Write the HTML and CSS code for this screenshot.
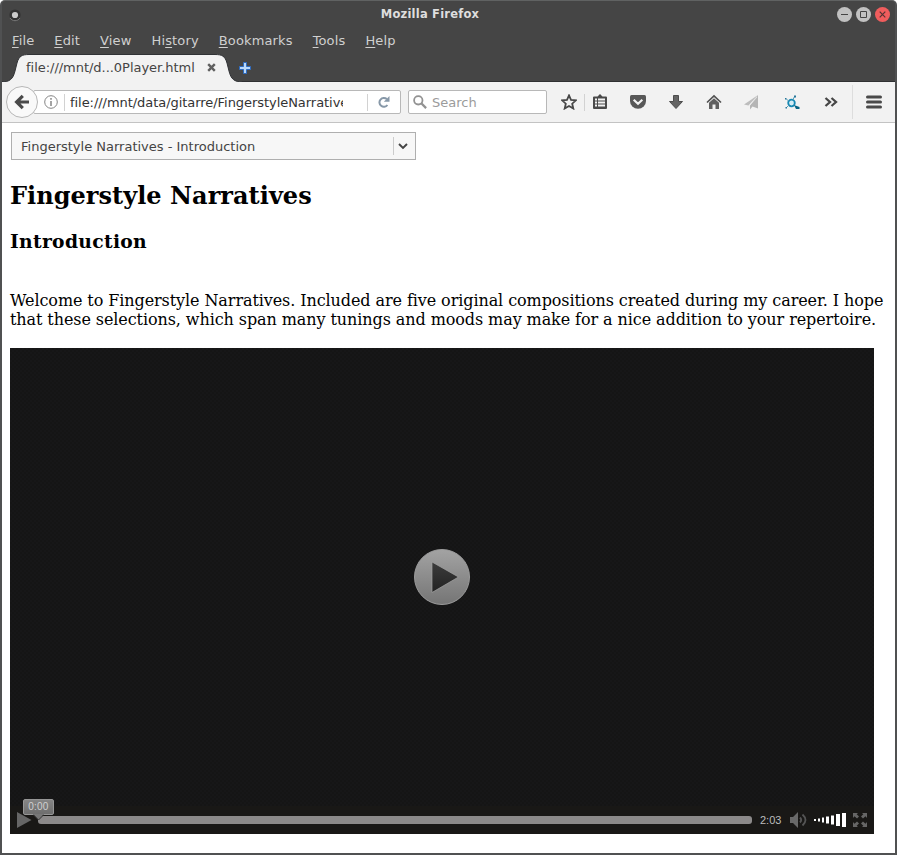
FILE: index.html
```
<!DOCTYPE html>
<html lang="en">
<head>
<meta charset="utf-8">
<title>Mozilla Firefox</title>
<link rel="stylesheet" href="styles.css">
</head>
<body>
<div class="window">
  <header class="titlebar">
    <svg class="dot" width="14" height="14" viewBox="0 0 14 14"><circle cx="7" cy="7" r="5.6" fill="#333"/><path d="M2 10a6 6 0 0 0 10 0" fill="none" stroke="#777"/><circle cx="7" cy="7" r="3.1" fill="#ccc"/></svg>
    <span class="title">Mozilla Firefox</span>
    <div class="controls">
      <svg width="15" height="15" viewBox="0 0 15 15"><circle cx="7.5" cy="7.5" r="7.5" fill="#c1c1c1"/><path d="M4 7.5h7" stroke="#444"/></svg>
      <svg width="15" height="15" viewBox="0 0 15 15"><circle cx="7.5" cy="7.5" r="7.5" fill="#c1c1c1"/><path d="M4.5 4.5h6v6h-6z" fill="none" stroke="#444"/></svg>
      <svg width="15" height="15" viewBox="0 0 15 15"><circle cx="7.5" cy="7.5" r="7.5" fill="#f05d5d"/><path d="M4.7 4.7l5.6 5.6M10.3 4.7l-5.6 5.6" stroke="#533" stroke-width="1.2"/></svg>
    </div>
  </header>
  <nav class="menu">
    <span><u>F</u>ile</span><span><u>E</u>dit</span><span><u>V</u>iew</span><span>Hi<u>s</u>tory</span><span><u>B</u>ookmarks</span><span><u>T</u>ools</span><span><u>H</u>elp</span>
  </nav>
  <div class="tabs">
    <div class="tab">
      <svg class="tab-shape" width="242" height="29" viewBox="0 0 242 29"><path d="M0 28C9 28 12 25 14 17L16 9C18 2 21 .5 28 .5H214C221 .5 224 2 226 9L228 17C230 25 233 28 242 28V29H0Z" fill="#f2f2f2" stroke="#303235"/><path d="M0 28.5H242" stroke="#f2f2f2"/></svg>
      <span class="tab-label">file:///mnt/d...0Player.html</span>
      <svg class="tab-close" width="9" height="9" viewBox="0 0 9 9"><path d="M1.2 1.2l6.6 6.6M7.8 1.2l-6.6 6.6" stroke="#606060" stroke-width="2.4"/></svg>
    </div>
    <svg class="plus" width="12" height="12" viewBox="0 0 12 12"><path d="M4.5.5h3v4h4v3h-4v4h-3v-4h-4v-3h4z" fill="#b9d8fa" stroke="#2d6bc0"/></svg>
  </div>
  <div class="toolbar">
    <div class="back"><svg width="16" height="16" viewBox="0 0 16 16"><path d="M8.8 1.8L2.600 8l6.200 6.200M3 8H15" fill="none" stroke="#4a4a4a" stroke-width="3.200"/></svg></div>
    <div class="url">
      <svg class="info" width="14" height="14" viewBox="0 0 14 14"><circle cx="7" cy="7" r="6.3" fill="none" stroke="#858585"/><path d="M7 6v5M7 3v1.7" stroke="#858585" stroke-width="1.5"/></svg>
      <i class="rule"></i>
      <span class="address">file:///mnt/data/gitarre/FingerstyleNarrative</span>
      <i class="rule end"></i>
      <svg class="reload" width="12" height="12" viewBox="0 0 12 12"><path d="M8.8 3.1A4.4 4.4 0 1 0 9.4 9" fill="none" stroke="#8798a8" stroke-width="2"/><path d="M11.5 0v5.8H5.8z" fill="#8798a8"/></svg>
    </div>
    <div class="search">
      <svg width="14" height="14" viewBox="0 0 14 14"><circle cx="5.3" cy="5.3" r="4.2" fill="none" stroke="#929292" stroke-width="1.8"/><path d="M8.3 8.3l4.8 4.8" stroke="#929292" stroke-width="2.3"/></svg>
      <span>Search</span>
    </div>
    <div class="icons">
      <svg class="star" width="16" height="16" viewBox="0 0 16 16"><path d="M8 1.4l2 4.5 4.9.5-3.7 3.3 1.1 4.8L8 12l-4.3 2.5 1.1-4.8L1.1 6.4 6 5.900z" fill="none" stroke="#484848" stroke-width="1.8"/></svg>
      <i class="rule"></i>
      <svg class="list" width="16" height="16" viewBox="0 0 16 16"><path d="M2 2.500h3.500L8 0l2.500 2.500H14q1 0 1 1V14q0 1-1 1H2q-1 0-1-1V3.500q0-1 1-1z" fill="#4a4a4a"/><path d="M3 5.500h2M6 5.500H13M3 8.500h2M6 8.500H13M3 11.500h2M6 11.500H13" stroke="#f3f3f3" stroke-width="2"/></svg>
      <svg width="16" height="16" viewBox="0 0 16 16"><path d="M1.500 1h13q1.500 0 1.500 1.500V7a8 7.800 0 0 1-16 0V2.500Q0 1 1.500 1z" fill="#585858"/><path d="M3.700 5.700L8 9.700l4.300-4" fill="none" stroke="#f3f3f3" stroke-width="2.200"/></svg>
      <svg width="16" height="16" viewBox="0 0 16 16"><path d="M5.500 1.500h5v6h4L8 14.500 1.500 7.500h4z" fill="#656565" stroke="#4d4d4d"/></svg>
      <svg width="16" height="16" viewBox="0 0 16 16"><path d="M1 8.500L8 2l7 6.500" fill="none" stroke="#525252" stroke-width="1.700"/><path d="M3 8.700L8 4.300l5 4.400V15H9.500v-4.500h-3V15H3z" fill="#606060"/></svg>
      <svg width="16" height="16" viewBox="0 0 16 16"><path d="M14 1L0 10.500l4.500 1z" fill="#bdbdbd"/><path d="M14 1L6 11.500v4L8.500 12.600l5.500 1.900z" fill="#b5b5b5"/><path d="M13 3L5.500 11.500" stroke="#eee" stroke-width=".7"/></svg>
      <svg class="hub" width="16" height="16" viewBox="0 0 16 16"><circle cx="7.500" cy="9" r="3.300" fill="#d5edf5" stroke="#1688b3" stroke-width="1.800"/><path d="M9 5.500L10.500 2.500M4.500 7L2.500 5M4.500 11.500L3 13" stroke="#5e9fb8" stroke-width="1"/><path d="M10 1.500h2v2h-2zM1 4h1.500v1.500H1zM1.500 13H3v1.500H1.500z" fill="#27779b"/><path d="M10 11l5.500 2v2H12z" fill="#076384"/></svg>
      <svg class="more" width="14" height="16" viewBox="0 0 14 16"><path d="M1.500 4L6 8l-4.500 4M7.500 4L12 8l-4.500 4" fill="none" stroke="#474747" stroke-width="2.300"/></svg>
      <i class="divider"></i>
      <svg class="burger" width="16" height="14" viewBox="0 0 16 14"><path d="M1.500 2h13M1.500 7h13M1.500 12h13" stroke="#494949" stroke-width="3" stroke-linecap="round"/></svg>
    </div>
  </div>
  <main class="page">
    <div class="select"><span>Fingerstyle Narratives - Introduction</span><i class="select-rule"></i><svg width="10" height="7" viewBox="0 0 10 7"><path d="M1 1l4 4 4-4" fill="none" stroke="#444" stroke-width="1.900"/></svg></div>
    <h2>Fingerstyle Narratives</h2>
    <h3>Introduction</h3>
    <p>Welcome to Fingerstyle Narratives. Included are five original compositions created during my career. I hope<br>that these selections, which span many tunings and moods may make for a nice addition to your repertoire.</p>
    <section class="video">
      <div class="screen">
        <svg width="56" height="56" viewBox="0 0 56 56"><defs><linearGradient id="disc" x2="0" y2="1"><stop stop-color="#a3a3a3"/><stop offset="1" stop-color="#757575"/></linearGradient><linearGradient id="tri" x2="0" y2="1"><stop stop-color="#3c3c3c"/><stop offset="1" stop-color="#222"/></linearGradient></defs><circle cx="28" cy="28" r="27.500" fill="url(#disc)" stroke="#9b9b9b"/><path d="M18 13L44.500 28 18 43.500z" fill="url(#tri)" stroke="#a5a5a5" stroke-width=".7"/></svg>
      </div>
      <div class="player">
        <svg class="play" width="15" height="16" viewBox="0 0 15 16"><path d="M0 0L14.500 8 0 16z" fill="#666"/></svg>
        <div class="track"><div class="tip">0:00<svg width="11" height="7" viewBox="0 0 11 7"><path d="M0 0h11L5.500 6z" fill="#777"/><path d="M0 .5L5.500 6 11 .5" fill="none" stroke="#333" stroke-width="1"/></svg></div></div>
        <span class="duration">2:03</span>
        <svg class="speaker" width="18" height="16" viewBox="0 0 18 16"><path d="M0 5h3l5-5v16l-5-5H0z" fill="#696969"/><path d="M10 5.500q2.500 2.500 0 5M12.500 2.500q6 5.500 0 11" fill="none" stroke="#555" stroke-width="1.800"/></svg>
        <svg class="volume" width="32" height="14" viewBox="0 0 32 14"><path d="M0 6h2v2H0zM4 5.500h2v3H4zM8 4.500h2v5H8zM12 3.500h3v7h-3zM17 2.500h3v9h-3zM22 1h4v12h-4zM28 0h4v14h-4z" fill="#fff"/></svg>
        <svg class="full" width="14" height="14" viewBox="0 0 14 14"><path d="M0 0h5L3.700 1.300 6 3.600 4 5.600 1.500 3.300 0 5zM14 0v5l-1.500-1.700L10 5.600 8 3.600l2.300-2.300L9 0zM0 14V9l1.500 1.700L4 8.400l2 2-2.300 2.300L5 14zM14 14H9l1.300-1.300L8 10.400l2-2 2.500 2.300L14 9z" fill="#666"/></svg>
      </div>
    </section>
  </main>
</div>
</body>
</html>
```
FILE: styles.css
```
* { box-sizing: border-box; }
body { margin: 0; background: #fff; font-family: "DejaVu Sans", sans-serif; overflow: hidden; }
svg { display: block; flex: none; }
.window { width: 897px; height: 855px; border: 2px solid #505152; border-top: 1px solid #606262; border-radius: 5px 5px 0 0; background: #454545; display: flex; flex-direction: column; overflow: hidden; }
.titlebar { height: 27px; flex: none; display: grid; grid-template-columns: 60px 1fr 60px; align-items: center; color: #dedede; }
.dot { margin-left: 6px; }
.title { font-size: 11.5px; letter-spacing: .22px; font-weight: bold; text-align: center; margin: 0 37px 2px 0; }
.controls { display: flex; gap: 4px; margin-left: 2px; }
.menu { height: 26px; flex: none; padding-left: 10px; display: flex; gap: 20px; line-height: 25px; font-size: 13px; letter-spacing: .14px; color: #d0d0d0; white-space: nowrap; }
.menu u { text-underline-offset: 2px; }
.tabs { height: 28px; flex: none; border-bottom: 1px solid #2f3032; display: flex; align-items: center; }
.tab { position: relative; width: 237px; height: 28px; padding-left: 24px; display: flex; align-items: center; color: #444; font-size: 13px; }
.tab-shape { position: absolute; left: -1px; top: 0; }
.tab-label { position: relative; width: 181px; white-space: nowrap; line-height: 26px; letter-spacing: -.03px; }
.tab-close { position: relative; }
.toolbar { height: 41px; flex: none; background: #f2f2f2; border-bottom: 1px solid #c3c3c3; display: flex; align-items: center; }
.back { position: relative; z-index: 1; margin-left: 4px; width: 32px; height: 32px; border: 1px solid #b7b7b7; border-radius: 50%; background: #f9f9f9; display: flex; align-items: center; justify-content: center; flex: none; }
.url { width: 368px; height: 24px; margin-left: -5px; border: 1px solid #b8b8b8; border-radius: 2px; background: #fff; display: flex; align-items: center; padding-left: 10px; flex: none; }
.rule { width: 1px; height: 17px; background: #d2d2d2; flex: none; }
.info + .rule { margin: 0 5px 0 6px; }
.address { width: 273px; overflow: hidden; white-space: nowrap; font-size: 13px; letter-spacing: -.05px; color: #333; flex: none; }
.end { margin: 0 10px 0 24px; }
.search { width: 139px; height: 24px; margin-left: 7px; border: 1px solid #b8b8b8; border-radius: 2px; background: #fff; display: flex; align-items: center; gap: 5px; padding-left: 4px; font-size: 13px; color: #9b9b9b; flex: none; }
.icons { display: flex; align-items: center; margin-left: 14px; }
.icons .rule { margin: 0 7px; }
.list { margin-right: 22px; }
.list ~ svg { margin-right: 22px; }
.icons .hub { margin: 0 24px 0 2px; }
.icons .more { margin-right: 14px; }
.divider { width: 1px; height: 34px; background: #ddd; margin-right: 13px; }
.icons .burger { margin: 0; }
.page { flex: 1; background: #fff; padding: 9px 8px 0; color: #000; font-family: "DejaVu Serif", serif; }
.select { width: 405px; height: 28px; margin-left: 1px; border: 1px solid #afafaf; background: #f7f7f7; display: flex; align-items: center; padding: 0 7px 0 9px; font: 13px "DejaVu Sans", sans-serif; color: #444; }
.select span { flex: 1; }
.select-rule { width: 1px; height: 18px; background: #ccc; margin-right: 4px; }
h2 { margin: 21px 0 0; font-size: 24px; line-height: 30px; letter-spacing: .04px; }
h3 { margin: 19px 0 0; font-size: 18.72px; line-height: 23px; letter-spacing: .32px; }
p { margin: 38px 0 0; font-size: 16px; line-height: 19px; letter-spacing: -.086px; white-space: nowrap; }
.video { margin-top: 19px; width: 864px; height: 486px; display: flex; flex-direction: column; background: repeating-conic-gradient(#151515 0 25%, #171718 0 50%) 0 0 / 4px 4px; }
.screen { height: 458px; display: flex; justify-content: center; align-items: center; }
.player { height: 28px; background: #191816; display: flex; align-items: center; padding-left: 7px; font-family: "Liberation Sans", sans-serif; }
.track { position: relative; width: 714px; height: 8px; margin-left: 6px; border-radius: 3px; background: #8c8a8a; }
.tip { position: absolute; left: -15px; top: -17px; width: 31px; height: 16px; border: 1px solid #969696; border-radius: 2px; background: linear-gradient(#858585, #6e6e6e); color: #d0d0d0; font-size: 10px; letter-spacing: .2px; line-height: 13px; text-align: center; }
.tip svg { position: absolute; left: 9px; top: 14px; }
.duration { width: 30px; margin-left: 8px; font-size: 11px; color: #bcbcbc; }
.volume { margin-left: 6px; }
.full { margin-left: 7px; }
```
